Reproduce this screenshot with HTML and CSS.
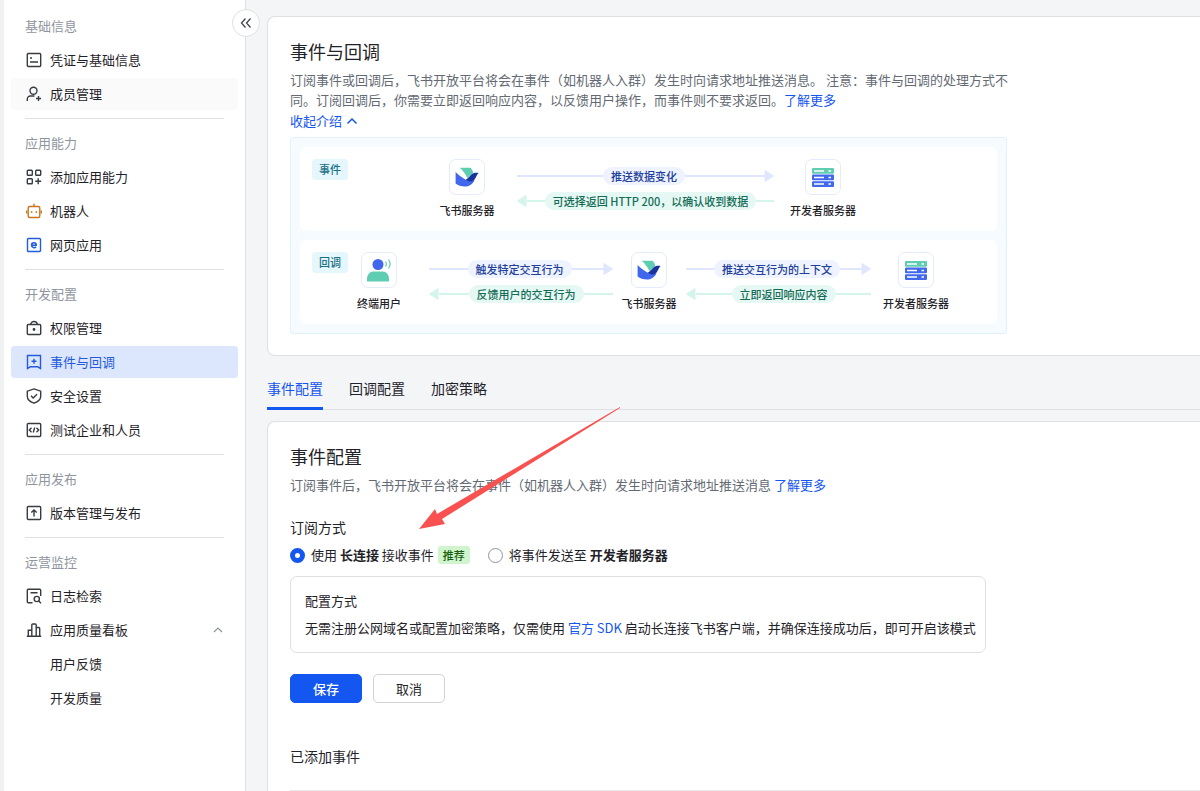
FILE: index.html
```html
<!DOCTYPE html>
<html lang="zh-CN">
<head>
<meta charset="utf-8">
<meta name="viewport" content="width=device-width, initial-scale=1">
<title>事件与回调</title>
<link rel="stylesheet" href="styles.css">
</head>
<body>
<svg class="defs" aria-hidden="true">
  <symbol id="bird" viewBox="0 0 24 20">
    <path d="M4.500.8h11c1.600 1.500 2.500 3.600 2.800 5.400-2.500.9-3.800 3-5.800 5C10.500 7.200 8 3.300 4.500.8z" fill="#5fcdb2"/>
    <path d="M.6 5c3.500 3.400 6.800 6 10.600 7.900l8.300.5c-2.500 4.200-5.500 6-9.500 6-3.800 0-7-1-9.400-2.900z" fill="#4168ec"/>
    <path d="M10.800 12.800c3-1.500 4.400-5.200 7.700-6.500 1.700-.6 3.500-.5 5-.2-1.800 2-2.600 4.700-4.300 7-2.500 2.300-5.200 1.600-8.400-.3z" fill="#18339b"/>
  </symbol>
  <symbol id="server" viewBox="0 0 22 19">
    <rect width="22" height="5.700" rx="1" fill="#5fcdb2"/>
    <rect y="6.600" width="22" height="5.700" rx="1" fill="#4168ec"/>
    <rect y="13.200" width="22" height="5.700" rx="1" fill="#4168ec"/>
    <path d="M2 2.900h10M2 9.500h10M2 16.100h10M16.500 2.900h2.500M16.500 9.500h2.500M16.500 16.100h2.500" stroke="#fff" stroke-width="1.500"/>
  </symbol>
  <symbol id="head" viewBox="0 0 10 14"><path d="M1 1.500v11L9.500 7z" fill="currentColor" stroke="currentColor" stroke-linejoin="round"/></symbol>
</svg>
<div class="shell">
  <aside class="sidebar">
    <nav class="menu">
      <section class="group">
        <h2 class="group-title">基础信息</h2>
        <a class="item" href="#"><svg class="icon" viewBox="0 0 16 16"><rect x="1.300" y="1.500" width="13.400" height="13" rx="1"/><path d="M4 6h2M4 10h8"/></svg>凭证与基础信息</a>
        <a class="item hover" href="#"><svg class="icon" viewBox="0 0 16 16"><circle cx="7.500" cy="4.800" r="3.500"/><path d="M1.300 15v-2a3 3 0 0 1 3-3H8.500M12.500 10v5M10 12.500h5"/></svg>成员管理</a>
      </section>
      <section class="group">
        <h2 class="group-title">应用能力</h2>
        <a class="item" href="#"><svg class="icon" viewBox="0 0 16 16"><rect x="1.300" y="1.300" width="5" height="5" rx=".8"/><rect x="9.700" y="1.300" width="5" height="5" rx=".8"/><rect x="1.300" y="9.700" width="5" height="5" rx=".8"/><path d="M12.200 9.200v6M9.200 12.200h6"/></svg>添加应用能力</a>
        <a class="item" href="#"><svg class="icon orange" viewBox="0 0 16 16"><rect x="2.200" y="3.500" width="11.600" height="11" rx="1.500"/><path d="M8 3.500V.8M.7 7.500v3M15.300 7.500v3M5.700 8.200v1.800M10.300 8.200v1.800"/></svg>机器人</a>
        <a class="item" href="#"><svg class="icon blue" viewBox="0 0 16 16"><rect x="1.500" y="1.500" width="13" height="13" rx="1"/><path d="M5.800 8.200h4.400c0-3.300-4.600-3.300-4.600 0 0 2.800 3.200 3 4.400 1.700" stroke-width="1.600"/></svg>网页应用</a>
      </section>
      <section class="group">
        <h2 class="group-title">开发配置</h2>
        <a class="item" href="#"><svg class="icon" viewBox="0 0 16 16"><rect x="1.300" y="4.500" width="13.400" height="10" rx="1"/><path d="M4.800 4.500C4.800.4 11.200.4 11.200 4.500"/><circle cx="8" cy="9.500" r=".7"/></svg>权限管理</a>
        <a class="item active" href="#" aria-current="page"><svg class="icon" viewBox="0 0 16 16"><path d="M1.500 14.500v-13h13v13l-2.800-1.700H4.300zM8 4.700v5M5.500 7.200h5"/></svg>事件与回调</a>
        <a class="item" href="#"><svg class="icon" viewBox="0 0 16 16"><path d="M8 .9l6.700 2.300v5c0 3.200-3 5.600-6.700 7-3.700-1.400-6.700-3.800-6.700-7v-5zM5 7.800l2.200 2.200L11 6.200"/></svg>安全设置</a>
        <a class="item" href="#"><svg class="icon" viewBox="0 0 16 16"><rect x="1.300" y="1.500" width="13.400" height="13" rx="1"/><path d="M5.500 5.700L3.300 8l2.200 2.300M10.500 5.700L12.700 8l-2.200 2.300M8.700 5.500l-1.400 5"/></svg>测试企业和人员</a>
      </section>
      <section class="group">
        <h2 class="group-title">应用发布</h2>
        <a class="item" href="#"><svg class="icon" viewBox="0 0 16 16"><rect x="1.300" y="1.500" width="13.400" height="13" rx="1"/><path d="M8 11.500v-6M5.300 7.600L8 4.900l2.700 2.700"/></svg>版本管理与发布</a>
      </section>
      <section class="group">
        <h2 class="group-title">运营监控</h2>
        <a class="item" href="#"><svg class="icon" viewBox="0 0 16 16"><path d="M6.500 14.700H2.300a1 1 0 0 1-1-1V2.300a1 1 0 0 1 1-1h11.400a1 1 0 0 1 1 1V8M4.500 4.800h7M12.700 13l2.300 2.300"/><circle cx="10.800" cy="11" r="2.600"/></svg>日志检索</a>
        <a class="item" href="#"><svg class="icon" viewBox="0 0 16 16"><path d="M.8 14.300h14.400M2.300 14.300v-6h3.500M5.800 14.300V3a1 1 0 0 1 1-1h2.400a1 1 0 0 1 1 1v11.300M10.200 5.500h2.500a1 1 0 0 1 1 1v7.800"/></svg>应用质量看板<svg class="chevron" viewBox="0 0 10 10"><path d="M1 7l4-4 4 4"/></svg></a>
        <a class="item sub" href="#">用户反馈</a>
        <a class="item sub" href="#">开发质量</a>
      </section>
    </nav>
    <button class="collapse" type="button" aria-label="收起导航"><svg viewBox="0 0 14 14"><path d="M6.500 2.500L2.500 7l4 4.500M11.500 2.500L7.500 7l4 4.500"/></svg></button>
  </aside>

  <main class="main">
    <section class="card intro">
      <h1 class="title">事件与回调</h1>
      <p class="desc">订阅事件或回调后，飞书开放平台将会在事件（如机器人入群）发生时向请求地址推送消息。 注意：事件与回调的处理方式不<br>同。订阅回调后，你需要立即返回响应内容，以反馈用户操作，而事件则不要求返回。<a class="link" href="#">了解更多</a></p>
      <button class="toggle" type="button">收起介绍<svg viewBox="0 0 12 12"><path d="M1.500 8.500L6 4l4.500 4.500"/></svg></button>
      <div class="diagram">
        <div class="flow flow-event">
          <span class="badge">事件</span>
          <div class="node"><span class="tile"><svg class="bird"><use href="#bird"/></svg></span><span>飞书服务器</span></div>
          <div class="links">
            <div class="arrow forward"><span class="pill">推送数据变化</span><svg class="head"><use href="#head"/></svg></div>
            <div class="arrow back"><svg class="head"><use href="#head"/></svg><span class="pill">可选择返回 HTTP 200，以确认收到数据</span></div>
          </div>
          <div class="node"><span class="tile"><svg class="server"><use href="#server"/></svg></span><span>开发者服务器</span></div>
        </div>
        <div class="flow flow-callback">
          <span class="badge">回调</span>
          <div class="node"><span class="tile"><svg class="user" viewBox="0 0 26 24"><circle cx="12" cy="6.500" r="5.500" fill="#4168ec"/><path d="M1 23.500v-2.500c0-4.500 3-7.500 6-7.500h10c3 0 6 3 6 7.500v2.500z" fill="#5fcdb2"/><path d="M19.500 3.500q1.600 2.500 0 5M22.500 1.500q3.200 4.500 0 9" fill="none" stroke="#5fcdb2" stroke-width="1.200"/></svg></span><span>终端用户</span></div>
          <div class="links">
            <div class="arrow forward"><span class="pill">触发特定交互行为</span><svg class="head"><use href="#head"/></svg></div>
            <div class="arrow back"><svg class="head"><use href="#head"/></svg><span class="pill">反馈用户的交互行为</span></div>
          </div>
          <div class="node"><span class="tile"><svg class="bird"><use href="#bird"/></svg></span><span>飞书服务器</span></div>
          <div class="links">
            <div class="arrow forward"><span class="pill">推送交互行为的上下文</span><svg class="head"><use href="#head"/></svg></div>
            <div class="arrow back"><svg class="head"><use href="#head"/></svg><span class="pill">立即返回响应内容</span></div>
          </div>
          <div class="node"><span class="tile"><svg class="server"><use href="#server"/></svg></span><span>开发者服务器</span></div>
        </div>
      </div>
    </section>

    <nav class="tabs">
      <a class="tab selected" href="#" aria-current="true">事件配置</a>
      <a class="tab" href="#">回调配置</a>
      <a class="tab" href="#">加密策略</a>
    </nav>

    <section class="card config">
      <h2 class="title">事件配置</h2>
      <p class="desc">订阅事件后，飞书开放平台将会在事件（如机器人入群）发生时向请求地址推送消息 <a class="link" href="#">了解更多</a></p>
      <h3 class="subtitle mode-title">订阅方式</h3>
      <div class="radios">
        <label class="radio"><input type="radio" name="mode" checked><span>使用 <b>长连接</b> 接收事件</span><span class="tag">推荐</span></label>
        <label class="radio"><input type="radio" name="mode"><span>将事件发送至 <b>开发者服务器</b></span></label>
      </div>
      <div class="box">
        <p>配置方式</p>
        <p>无需注册公网域名或配置加密策略，仅需使用 <a class="link" href="#">官方 SDK</a> 启动长连接飞书客户端，并确保连接成功后，即可开启该模式</p>
      </div>
      <div class="actions">
        <button class="btn primary" type="button">保存</button>
        <button class="btn" type="button">取消</button>
      </div>
      <h3 class="subtitle added">已添加事件</h3>
    </section>
  </main>
  <svg class="pointer" viewBox="0 0 202 123" aria-hidden="true"><path d="M0 122L16 102l2 5L201 0v1L23 112l3 5z" fill="#f8514f"/></svg>
</div>
</body>
</html>
```
FILE: styles.css
```css
* { box-sizing: border-box; }
body, h1, h2, h3, p { margin: 0; }
body {
  font: 13px/20px "Noto Sans CJK SC", "Noto Sans", sans-serif;
  color: #1f2329;
  background: #f4f5f7;
}
h1, h2, h3 { font-weight: 400; }
a { color: inherit; text-decoration: none; }
button { font: inherit; color: inherit; cursor: pointer; }
.defs { display: none; }

.shell {
  position: relative;
  display: flex;
  height: 100vh;
  overflow: hidden;
}

.sidebar {
  position: relative;
  flex: none;
  width: 246px;
  border-left: 4px solid #f0f1f2;
  border-right: 1px solid #dee0e3;
  background: #fff;
}
.menu { padding: 10px 7px; }
.group { display: grid; gap: 2px; }
.group + .group::before {
  content: "";
  height: 1px;
  margin: 6px 14px;
  background: #dee0e3;
}
.group + .group { padding-top: 2px; }
.group-title {
  padding: 0 14px;
  font-size: 13px;
  line-height: 32px;
  color: #8f959e;
}
.item {
  display: flex;
  align-items: center;
  height: 32px;
  padding: 0 15px;
  border-radius: 4px;
  white-space: nowrap;
}
.item.hover { background: #fafafb; }
.item.active { background: #dce6fd; color: #245bdb; }
.item.sub { padding-left: 39px; }
.icon {
  width: 16px;
  height: 16px;
  margin-right: 8px;
  fill: none;
  stroke: #373c43;
  stroke-width: 1.4;
}
.icon.orange { stroke: #cb7522; }
.icon.blue, .active .icon { stroke: #245bdb; }
.chevron {
  width: 10px;
  height: 10px;
  margin-left: auto;
  fill: none;
  stroke: #8f959e;
  stroke-width: 1.2;
}
.collapse {
  position: absolute;
  top: 9px;
  right: -15px;
  display: grid;
  place-items: center;
  width: 28px;
  height: 28px;
  padding: 0;
  border: 1px solid #dee0e3;
  border-radius: 50%;
  background: #fff;
}
.collapse svg {
  width: 14px;
  height: 14px;
  fill: none;
  stroke: #41464d;
  stroke-width: 1.3;
}

.main {
  flex: 1;
  min-width: 0;
  display: flex;
  flex-direction: column;
  padding: 16px 0 0 21px;
}
.card {
  flex: none;
  padding: 22px 0 21px 22px;
  border: 1px solid #dee0e3;
  border-right: 0;
  border-radius: 8px 0 0 8px;
  background: #fff;
}
.title { font-size: 18px; line-height: 24px; }
.desc { margin-top: 7px; color: #646a73; white-space: nowrap; }
.link { color: #1456f0; }
.toggle {
  display: flex;
  align-items: center;
  gap: 4px;
  padding: 0;
  border: 0;
  background: none;
  line-height: 22px;
  color: #1456f0;
}
.toggle svg {
  width: 12px;
  height: 12px;
  fill: none;
  stroke: currentColor;
  stroke-width: 1.5;
}

.diagram {
  display: grid;
  gap: 9px;
  max-width: 717px;
  margin-top: 5px;
  padding: 9px;
  border: 1px solid #e3f1fa;
  border-radius: 3px;
  background: #f5fbff;
  font-size: 11px;
  line-height: 16px;
}
.flow {
  display: grid;
  align-items: start;
  padding: 12px 12px 13px;
  border-radius: 6px;
  background: #fff;
  white-space: nowrap;
}
.flow-event { grid-template-columns: 36px 101px 36px 32px 257px 31px 36px; }
.flow-event > :nth-child(2) { grid-column: 3; }
.flow-event > :nth-child(3) { grid-column: 5; }
.flow-event > :nth-child(4) { grid-column: 7; }
.flow-callback { grid-template-columns: 36px 13px 36px 32px 184px 18px 36px 19px 185px 27px 36px; }
.flow-callback > :nth-child(2) { grid-column: 3; }
.flow-callback > :nth-child(3) { grid-column: 5; }
.flow-callback > :nth-child(4) { grid-column: 7; }
.flow-callback > :nth-child(5) { grid-column: 9; }
.flow-callback > :nth-child(6) { grid-column: 11; }
.badge {
  border-radius: 4px;
  background: #e5f7fc;
  color: #1d7187;
  font-weight: 500;
  line-height: 21px;
  text-align: center;
}
.node {
  display: flex;
  flex-direction: column;
  align-items: center;
  gap: 7px;
  font-weight: 500;
}
.tile {
  display: grid;
  place-items: center;
  width: 36px;
  height: 36px;
  border: 1px solid #e4ebfb;
  border-radius: 7px;
}
.bird { width: 24px; height: 20px; }
.server { width: 22px; height: 19px; }
.user { width: 26px; height: 24px; }
.links { display: grid; gap: 7px; padding-top: 8px; }
.arrow { display: flex; align-items: center; }
.arrow::before, .arrow::after {
  content: "";
  flex: 1;
  height: 2px;
  background: currentColor;
}
.head { width: 10px; height: 14px; }
.forward { color: #dfe6fe; }
.forward::before { margin-right: -4px; padding-right: 10px; }
.forward::after { order: 1; }
.forward .head { order: 2; margin-left: -1px; }
.back { color: #d4f4ec; }
.back .head { order: -1; transform: rotate(180deg); }
.pill {
  position: relative;
  padding: 0 8px;
  border-radius: 9px;
  font-weight: 500;
  line-height: 18px;
}
.forward .pill { background: #eff3ff; color: #20409b; }
.back .pill { background: #e6f8f4; color: #146c55; }

.tabs {
  display: flex;
  flex: none;
  gap: 26px;
  margin-top: 16px;
  border-bottom: 1px solid #dee0e3;
  font-size: 14px;
  line-height: 32px;
}
.tab { margin-bottom: -1px; padding-bottom: 3px; border-bottom: 3px solid transparent; }
.tab.selected { border-color: #1456f0; color: #1456f0; }

.config {
  flex: 1 0 auto;
  margin-top: 11px;
  padding-bottom: 0;
  border-bottom: 0;
  border-bottom-left-radius: 0;
}
.subtitle { font-size: 14px; line-height: 22px; }
.mode-title { margin-top: 21px; }
.radios { display: flex; gap: 18px; margin-top: 7px; }
.radio { display: flex; align-items: center; }
.radio input {
  appearance: none;
  width: 15px;
  height: 15px;
  margin: 0 6px 0 0;
  border: 1px solid #8f959e;
  border-radius: 50%;
  background: #fff;
}
.radio input:checked { border: 5px solid #1456f0; }
.radio b { font-weight: 700; }
.tag {
  margin-left: 4px;
  padding: 0 5px;
  border-radius: 3px;
  background: #d0f5ce;
  color: #186010;
  font-size: 11px;
  font-weight: 500;
  line-height: 18px;
}
.box {
  display: grid;
  gap: 7px;
  max-width: 696px;
  margin-top: 11px;
  padding: 14px 0 14px 14px;
  border: 1px solid #dee0e3;
  border-radius: 7px;
  white-space: nowrap;
}
.actions { display: flex; gap: 11px; margin-top: 21px; }
.btn {
  width: 72px;
  height: 29px;
  padding: 0;
  border: 1px solid #d0d3d6;
  border-radius: 5px;
  background: #fff;
}
.btn.primary { border-color: #1456f0; background: #1456f0; color: #fff; font-weight: 500; }
.added { margin-top: 42px; padding-bottom: 23px; border-bottom: 1px solid #e8e9eb; }

.pointer {
  position: absolute;
  top: 407px;
  left: 419px;
  width: 202px;
  height: 123px;
  pointer-events: none;
}
```
